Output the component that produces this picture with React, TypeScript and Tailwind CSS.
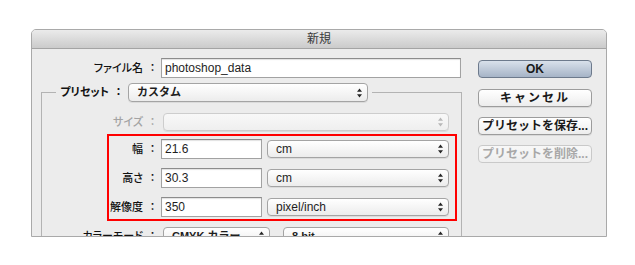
import React from 'react';

const Arrows: React.FC<{ disabled?: boolean }> = ({ disabled }) => (
  <svg width="5" height="10" viewBox="0 0 5 10" className="shrink-0">
    <path d="M2.5 0.5 L5 3.8 H0 Z M0 6.2 H5 L2.5 9.5 Z" fill={disabled ? '#b8b8b8' : '#262626'} />
  </svg>
);

const Label: React.FC<{ text: string; width: string; disabled?: boolean; bold?: boolean }> = ({ text, width, disabled, bold }) => (
  <div
    className={`flex shrink-0 items-center justify-end text-[11px] [font-feature-settings:'palt'] ${width} ${disabled ? 'text-[#a3a3a3]' : 'text-[#111]'} ${bold ? 'font-bold' : 'font-medium'}`}
  >
    <span className="mr-[4px]">{text}</span>
    <span className="w-[11px] text-center [font-feature-settings:normal]">：</span>
  </div>
);

const Select: React.FC<{ value?: string; className: string; disabled?: boolean; bold?: boolean }> = ({ value, className, disabled, bold }) => (
  <div
    className={`flex shrink-0 items-center justify-between rounded-[4px] border pl-[8px] pr-[5px] shadow-[0_1px_0_rgba(0,0,0,0.07)] ${className} ${
      disabled
        ? 'border-[#cdcdcd] bg-linear-to-b from-[#f8f8f8] to-[#efefef]'
        : 'border-[#a4a4a4] bg-linear-to-b from-white to-[#ececec]'
    }`}
  >
    <span className={`${bold ? 'font-bold text-[11px]' : 'text-[12px]'} leading-none`}>{value}</span>
    <Arrows disabled={disabled} />
  </div>
);

const Field: React.FC<{ value: string; className: string }> = ({ value, className }) => (
  <div
    className={`flex h-[20px] shrink-0 items-center border border-[#a2a2a2] border-t-[#8c8c8c] bg-white pl-[3px] text-[12px] shadow-[inset_0_1px_1px_rgba(0,0,0,0.12)] ${className}`}
  >
    {value}
  </div>
);

const Button: React.FC<{ children: React.ReactNode; className?: string; disabled?: boolean; primary?: boolean }> = ({ children, className, disabled, primary }) => (
  <div
    className={`flex h-[18px] items-center justify-center rounded-[4px] border text-[12px] font-bold leading-none ${className ?? ''} ${
      primary
        ? 'border-[#6d7a8c] bg-linear-to-b from-[#d9e1eb] to-[#a6b4c7] text-[#1a1a1a]'
        : disabled
        ? 'border-[#c9c9c9] bg-linear-to-b from-[#f8f8f8] to-[#efefef] text-[#a8a8a8]'
        : 'border-[#9c9c9c] bg-linear-to-b from-white to-[#ededed] text-[#1a1a1a] shadow-[0_1px_0_rgba(0,0,0,0.08)]'
    }`}
  >
    {children}
  </div>
);

export default function App() {
  return (
    <div className="min-h-[265px] bg-white pl-[31px] pt-[29px] font-['Liberation_Sans','Noto_Sans_CJK_JP',sans-serif] text-[#1e1e1e]">
      <div className="h-[208px] w-[576px] overflow-hidden rounded-t-[5px] border border-[#a9a9a9] bg-[#ececec]">
        {/* title bar */}
        <div className="flex h-[19px] items-center justify-center border-b border-[#a4a4a4] bg-linear-to-b from-[#ebebeb] to-[#cbcbcb] text-[12px] text-[#3a3a3a]">
          新規
        </div>

        <div className="flex">
          <div className="w-[430px] pt-[9px]">
            <div className="flex h-[20px] items-center">
              <Label text="ファイル名" width="w-[126px]" />
              <Field value="photoshop_data" className="ml-[3px] w-[300px]" />
            </div>

            <fieldset className="ml-[9px] mt-[5px] w-[421px] border border-[#b3b3b3] pb-[40px]">
              <legend className="ml-[14px] pr-[4px]">
                <div className="flex items-center">
                  <Label text="プリセット" width="w-[68px]" bold />
                  <Select value="カスタム" bold className="ml-[4px] h-[19px] w-[240px]" />
                </div>
              </legend>

              <div className="pt-[11px]">
                <div className="flex h-[18px] items-center">
                  <Label text="サイズ" width="w-[116px]" disabled />
                  <Select disabled className="ml-[5px] h-[18px] w-[286px]" />
                </div>

                <div className="ml-[65px] mt-[3px] flex w-[350px] flex-col gap-[9px] border-2 border-[#ff0000] pb-[2px] pt-[3px]">
                  <div className="flex h-[20px] items-center">
                    <Label text="幅" width="w-[49px]" />
                    <Field value="21.6" className="ml-[3px] w-[101px]" />
                    <Select value="cm" className="ml-[5px] h-[18px] w-[182px]" />
                  </div>
                  <div className="flex h-[20px] items-center">
                    <Label text="高さ" width="w-[49px]" />
                    <Field value="30.3" className="ml-[3px] w-[101px]" />
                    <Select value="cm" className="ml-[5px] h-[18px] w-[182px]" />
                  </div>
                  <div className="flex h-[20px] items-center">
                    <Label text="解像度" width="w-[49px]" />
                    <Field value="350" className="ml-[3px] w-[101px]" />
                    <Select value="pixel/inch" className="ml-[5px] h-[18px] w-[182px]" />
                  </div>
                </div>

                <div className="mt-[5px] flex h-[20px] items-center">
                  <Label text="カラーモード" width="w-[116px]" />
                  <Select value="CMYK カラー" bold className="ml-[5px] h-[18px] w-[107px]" />
                  <Select value="8 bit" bold className="ml-[13px] h-[18px] w-[166px]" />
                </div>
              </div>
            </fieldset>
          </div>

          <div className="ml-[16px] flex w-[114px] flex-col pt-[11px]">
            <Button primary>OK</Button>
            <Button className="mt-[11px] tracking-[2px]">キャンセル</Button>
            <Button className="mt-[10px]">プリセットを保存...</Button>
            <Button className="mt-[10px]" disabled>
              プリセットを削除...
            </Button>
          </div>
        </div>
      </div>
    </div>
  );
}
